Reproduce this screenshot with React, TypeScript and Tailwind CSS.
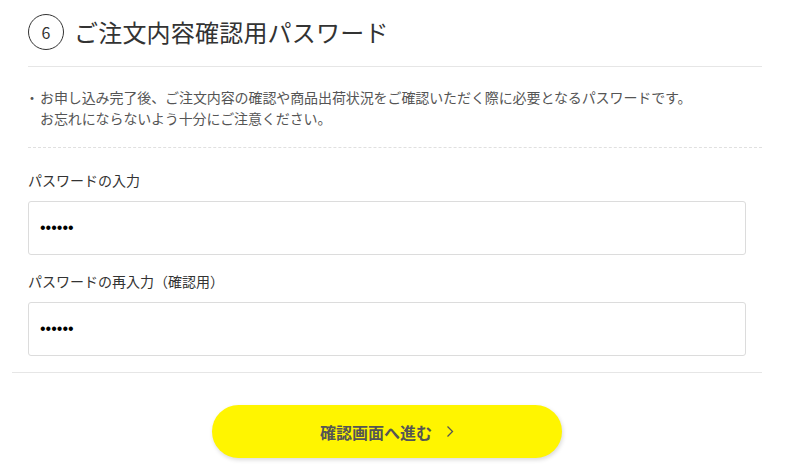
import React from 'react';

const jp = { fontFamily: '"Noto Sans CJK JP", "Noto Sans", sans-serif' };

const PasswordField: React.FC<{ label: string }> = ({ label }) => (
  <div>
    <p className="text-[14px] leading-[20px] text-[#333]">{label}</p>
    <input
      type="password"
      defaultValue="123456"
      className="mt-[11px] block h-[54px] w-[718px] rounded-[3px] border border-[#dcdcdc] bg-white px-[11px] text-[16px] text-black outline-none"
      style={{ fontFamily: '"Liberation Sans", Arial, sans-serif' }}
    />
  </div>
);

const App: React.FC = () => {
  return (
    <div className="h-[470px] w-[798px] overflow-hidden bg-white" style={jp}>
      <div className="pl-[28px] pr-[36px] pt-[14px]">
        {/* Heading */}
        <div className="flex items-center gap-[10px]">
          <span className="flex h-[36px] w-[36px] items-center justify-center rounded-full border border-[#333] text-[16px] text-[#333]">
            6
          </span>
          <h2 className="text-[24px] leading-[36px] font-normal tracking-[0.2px] text-[#333]">
            ご注文内容確認用パスワード
          </h2>
        </div>
        <div className="mt-[16px] border-b border-[#e6e6e6]" />

        {/* Note */}
        <div className="border-b border-dashed border-[#e0e0e0] pt-[20px] pb-[18px] text-[14px] leading-[21px] text-[#555]">
          <div className="flex">
            <span className="w-[12px] shrink-0 overflow-visible">
              <span className="-ml-[3px] inline-block w-[14px]">・</span>
            </span>
            <p className="tracking-[-0.1px]">
              お申し込み完了後、ご注文内容の確認や商品出荷状況をご確認いただく際に必要となるパスワードです。
              <br />
              お忘れにならないよう十分にご注意ください。
            </p>
          </div>
        </div>

        {/* Fields */}
        <div className="flex flex-col gap-[16px] pt-[22px] pb-[16px]">
          <PasswordField label="パスワードの入力" />
          <PasswordField label="パスワードの再入力（確認用）" />
        </div>
      </div>

      <div className="ml-[12px] mr-[36px] border-b border-[#e6e6e6]" />

      {/* Submit */}
      <div className="flex justify-center pt-[32px] pr-[24px]">
        <button className="flex h-[53px] w-[350px] items-center justify-center gap-[14px] rounded-full bg-[#fff500] text-[16px] font-bold text-[#555] shadow-[1px_2px_4px_rgba(0,0,0,0.15)]">
          <span>確認画面へ進む</span>
          <svg width="8" height="13" viewBox="0 0 8 13" fill="none">
            <polyline points="1.5,1.5 6.5,6.5 1.5,11.5" stroke="#555" strokeWidth="1.3" />
          </svg>
        </button>
      </div>
    </div>
  );
};

export default App;
